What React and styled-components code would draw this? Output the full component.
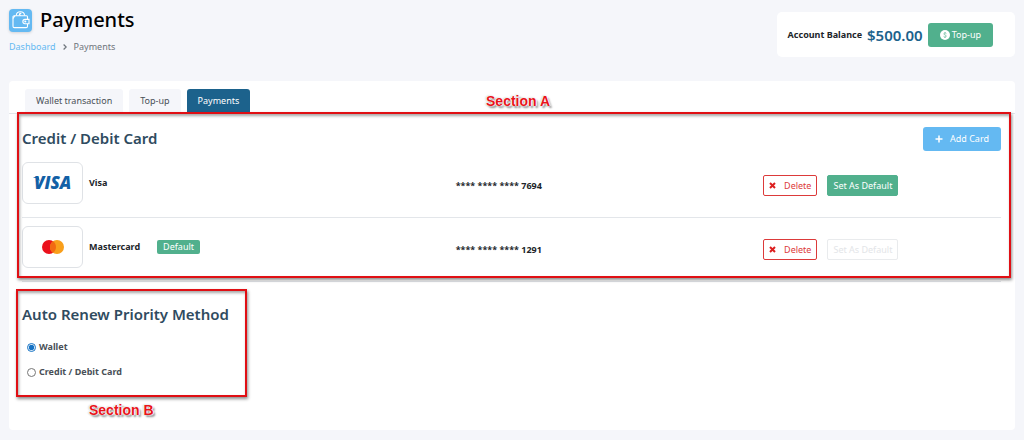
import React, { useState } from 'react';
import styled, { createGlobalStyle, css } from 'styled-components';

const cards = [
  { id: 1, brand: 'Visa', number: '**** **** **** 7694', isDefault: false },
  { id: 2, brand: 'Mastercard', number: '**** **** **** 1291', isDefault: true },
];

const tabs = ['Wallet transaction', 'Top-up', 'Payments'];

const WalletIcon = () => (
  <svg width="18" height="18" viewBox="0 0 18 18" fill="none" stroke="#fff" strokeWidth="1.1">
    <path d="M15.500 8V5.800c0-.7-.4-1.100-1.100-1.100H2.400C1.400 4.700 1 5.300 1 6v9.200c0 .9.5 1.400 1.400 1.400h11.700c.9 0 1.400-.5 1.400-1.400V13" />
    <path d="M17 8.400h-4a2.100 2.100 0 0 0 0 4.300h4z" />
    <circle cx="13.300" cy="10.500" r=".5" />
    <path d="M4.200 4.500C4.500 2 6.200.8 8.400.8s3.900 1.200 4.200 3.700M1 7.500l2-2.800" />
    <path d="M9.300 2.400H8a.9.900 0 0 0 0 1.700h.8M8.500 1.700v.7" />
  </svg>
);

const DollarIcon = () => (
  <svg width="10" height="10" viewBox="0 0 10 10">
    <circle cx="5" cy="5" r="5" fill="#fff" />
    <path d="M6.400 3.600C6 2.900 3.900 2.800 3.800 3.900 3.800 5.100 6.400 4.800 6.300 6.100 6.200 7.300 4 7.200 3.600 6.400M5 2v1M5 7v1" fill="none" stroke="#51b08d" strokeWidth=".7" />
  </svg>
);

const PlusIcon = () => (
  <svg width="8" height="8" viewBox="0 0 8 8" stroke="#fff" strokeWidth="1.500">
    <path d="M4 .5v7M.5 4h7" />
  </svg>
);

const CrossIcon = () => (
  <svg width="7" height="7" viewBox="0 0 7 7" stroke="#dc1f1f" strokeWidth="2">
    <path d="M1 1l5 5M6 1L1 6" />
  </svg>
);

const ChevronIcon = () => (
  <svg width="4" height="6" viewBox="0 0 4 6" fill="none" stroke="#6f757c" strokeWidth="1.200">
    <path d="M.6.500L3.200 3 .6 5.500" />
  </svg>
);

const MastercardLogo = () => (
  <svg width="22" height="14" viewBox="0 0 22 14">
    <circle cx="7" cy="7" r="7" fill="#eb111c" />
    <circle cx="15" cy="7" r="7" fill="#f99f1b" />
    <path d="M11 1.260a7 7 0 0 1 0 11.480 7 7 0 0 1 0-11.480z" fill="#f26a13" />
  </svg>
);

const VisaLogo = () => (
  <svg width="48" height="32" viewBox="-4 -8 48 32" fill="#1260a6">
    <path d="M.5 2h4.200c.8 0 1.200.4 1.300 1L6.600 6.500C5.500 4.300 3.400 2.900.5 2.400z" />
    <VisaText x="1" y="14">VISA</VisaText>
  </svg>
);

const App = () => {
  const [activeTab, setActiveTab] = useState('Payments');
  const [method, setMethod] = useState('wallet');

  return (
    <>
      <GlobalStyle />
      <Page>
        <Header>
          <div>
            <TitleRow>
              <IconTile><WalletIcon /></IconTile>
              <Title>Payments</Title>
            </TitleRow>
            <Breadcrumb aria-label="Breadcrumb">
              <a href="#dashboard">Dashboard</a>
              <ChevronIcon />
              <span>Payments</span>
            </Breadcrumb>
          </div>
          <BalanceBox>
            <BalanceLabel>Account Balance</BalanceLabel>
            <Balance>$500.00</Balance>
            <TopUpButton type="button"><DollarIcon />Top-up</TopUpButton>
          </BalanceBox>
        </Header>

        <Panel>
          <Tabs role="tablist">
            {tabs.map((tab) => (
              <Tab
                key={tab}
                type="button"
                role="tab"
                aria-selected={tab === activeTab}
                $active={tab === activeTab}
                onClick={() => setActiveTab(tab)}
              >
                {tab}
              </Tab>
            ))}
          </Tabs>

          <CardSection>
            <SectionHead>
              <Heading>Credit / Debit Card</Heading>
              <AddButton type="button"><PlusIcon />Add Card</AddButton>
            </SectionHead>
            <CardTable aria-label="Credit / Debit Card">
              <tbody>
                {cards.map((card) => (
                  <tr key={card.id}>
                    <BrandCell>
                      <Brand>
                        <Logo>
                          {card.brand === 'Visa' ? <VisaLogo /> : <MastercardLogo />}
                        </Logo>
                        {card.brand}
                        {card.isDefault && <Badge>Default</Badge>}
                      </Brand>
                    </BrandCell>
                    <NumberCell>{card.number}</NumberCell>
                    <td>
                      <Actions>
                        <RowButton type="button" $variant="danger"><CrossIcon />Delete</RowButton>
                        <RowButton type="button" $variant="success" disabled={card.isDefault}>
                          Set As Default
                        </RowButton>
                      </Actions>
                    </td>
                  </tr>
                ))}
              </tbody>
            </CardTable>
            <CardFrame />
            <CardNote>Section A</CardNote>
          </CardSection>

          <MethodSection>
            <Heading id="method-title">Auto Renew Priority Method</Heading>
            <Options role="radiogroup" aria-labelledby="method-title">
              <Option>
                <input
                  type="radio"
                  name="method"
                  checked={method === 'wallet'}
                  onChange={() => setMethod('wallet')}
                />
                Wallet
              </Option>
              <Option>
                <input
                  type="radio"
                  name="method"
                  checked={method === 'card'}
                  onChange={() => setMethod('card')}
                />
                Credit / Debit Card
              </Option>
            </Options>
            <MethodFrame />
            <MethodNote>Section B</MethodNote>
          </MethodSection>
        </Panel>
      </Page>
    </>
  );
};

export default App;

const GlobalStyle = createGlobalStyle`
  * {
    box-sizing: border-box;
  }

  body {
    margin: 0;
    background: #f5f6fa;
    color: #343a40;
    font-family: 'Noto Sans', 'Open Sans', sans-serif;
    font-size: 9px;
    line-height: 14px;
  }

  button {
    font: inherit;
    cursor: pointer;
  }

  svg {
    display: block;
    flex-shrink: 0;
  }
`;

const Page = styled.main`
  padding: 8px 9px 10px 9px;
`;

const Header = styled.header`
  display: flex;
  justify-content: space-between;
  align-items: flex-start;
`;

const TitleRow = styled.div`
  display: flex;
  align-items: center;
  gap: 8px;
`;

const IconTile = styled.span`
  display: flex;
  align-items: center;
  justify-content: center;
  width: 23px;
  height: 23px;
  border-radius: 4px;
  background: #64b9f2;
  box-shadow: 0 1px 3px rgba(0, 0, 0, 0.15);
`;

const Title = styled.h1`
  margin: 0;
  color: #000;
  font-size: 20px;
  font-weight: 500;
  line-height: 24px;
`;

const Breadcrumb = styled.nav`
  display: flex;
  align-items: center;
  gap: 7px;
  margin-top: 8px;
  color: #6f757c;

  a {
    color: #64b9f2;
    text-decoration: none;
  }
`;

const BalanceBox = styled.div`
  display: flex;
  align-items: center;
  gap: 5px;
  margin-top: 4px;
  padding: 11px 22px 10px 11px;
  border-radius: 5px;
  background: #fff;
`;

const BalanceLabel = styled.span`
  color: #212529;
  font-weight: 700;
`;

const Balance = styled.strong`
  color: #1c628c;
  font-size: 15px;
  font-weight: 600;
  line-height: 20px;
`;

const TopUpButton = styled.button`
  display: flex;
  align-items: center;
  gap: 2px;
  height: 24px;
  padding: 0 12px;
  border: 0;
  border-radius: 3px;
  background: #51b08d;
  color: #fff;
`;

const Panel = styled.section`
  margin-top: 24px;
  padding: 8px 0 51px;
  border-radius: 4px;
  background: #fff;
`;

const Tabs = styled.div`
  display: flex;
  gap: 6px;
  padding: 0 16px;
  border-bottom: 1px solid #e3e6ea;
`;

const Tab = styled.button`
  height: 24px;
  padding: 0 11px;
  border: 0;
  border-radius: 3px 3px 0 0;
  background: ${({ $active }) => ($active ? '#1c628c' : '#f5f6fa')};
  color: ${({ $active }) => ($active ? '#fff' : '#495057')};
`;

const CardSection = styled.section`
  position: relative;
  margin: 0 14px 0 13px;
  padding-top: 13px;
`;

const SectionHead = styled.div`
  display: flex;
  align-items: flex-start;
  justify-content: space-between;
`;

const Heading = styled.h2`
  margin: 0;
  color: #2f4b60;
  font-size: 15px;
  font-weight: 600;
  line-height: 22px;
`;

const AddButton = styled.button`
  display: flex;
  align-items: center;
  gap: 7px;
  height: 24px;
  padding: 0 12px;
  border: 0;
  border-radius: 3px;
  background: #64b9f2;
  color: #fff;
`;

const CardTable = styled.table`
  width: 100%;
  margin-top: 3px;
  border-spacing: 0;
  table-layout: fixed;

  td {
    padding: 0;
    border-bottom: 1px solid #e3e6ea;
  }
`;

const BrandCell = styled.td`
  && {
    width: 44.3%;
    padding: 8px 0 13px;
  }
`;

const NumberCell = styled.td`
  width: 31.4%;
  color: #212529;
  font-weight: 700;
`;

const Brand = styled.div`
  display: flex;
  align-items: center;
  gap: 6px;
  color: #212529;
  font-weight: 700;
`;

const Logo = styled.span`
  display: flex;
  align-items: center;
  justify-content: center;
  width: 61px;
  height: 42px;
  border: 1px solid #dfe2e6;
  border-radius: 6px;
`;

const VisaText = styled.text`
  font-family: 'Open Sans', sans-serif;
  font-size: 17px;
  font-style: italic;
  font-weight: 800;
`;

const Badge = styled.span`
  margin-left: 11px;
  padding: 0 6px;
  border-radius: 2px;
  background: #51b08d;
  color: #fff;
  font-weight: 400;
`;

const Actions = styled.div`
  display: flex;
  gap: 10px;
`;

const variants = {
  danger: css`
    border-color: #dc3a3a;
    background: #fff;
    color: #dc3a3a;
  `,
  success: css`
    border-color: #51b08d;
    background: #51b08d;
    color: #fff;
  `,
};

const RowButton = styled.button`
  display: flex;
  align-items: center;
  gap: 8px;
  height: 21px;
  padding: 0 5px;
  border: 1px solid;
  border-radius: 2px;
  ${({ $variant }) => variants[$variant]}

  &:disabled {
    border-color: #e9ebed;
    background: #fff;
    color: #e3e5e8;
    cursor: default;
  }
`;

const MethodSection = styled.section`
  position: relative;
  margin: 0 13px;
  padding-top: 21px;
`;

const Options = styled.div`
  display: flex;
  flex-direction: column;
  gap: 11px;
  margin-top: 15px;
  padding-left: 5px;
`;

const Option = styled.label`
  display: flex;
  align-items: center;
  align-self: flex-start;
  gap: 3px;
  color: #495057;
  font-weight: 700;

  input {
    width: 9px;
    height: 9px;
    margin: 0;
    accent-color: #1672c4;
  }
`;

const Frame = styled.div`
  position: absolute;
  border: 2px solid #e00f14;
  box-shadow: 1px 2px 3px rgba(0, 0, 0, 0.45), inset 1px 2px 3px rgba(0, 0, 0, 0.35);
  pointer-events: none;
`;

const CardFrame = styled(Frame)`
  inset: -2px -10px 4px -5px;
`;

const MethodFrame = styled(Frame)`
  top: 7px;
  bottom: -18px;
  left: -6px;
  width: 231px;
`;

const Note = styled.span`
  position: absolute;
  color: #e8141b;
  font-family: 'Liberation Sans', Arial, sans-serif;
  font-size: 14px;
  font-weight: 700;
  line-height: 16px;
  text-shadow: 0 0 1px #fff, 1px 0 1px #fff, -1px 0 1px #fff, 2px 2px 2px #888, -1px 0 2px #aaa;
`;

const CardNote = styled(Note)`
  top: -21px;
  left: 47.4%;
`;

const MethodNote = styled(Note)`
  bottom: -39px;
  left: 67px;
`;
